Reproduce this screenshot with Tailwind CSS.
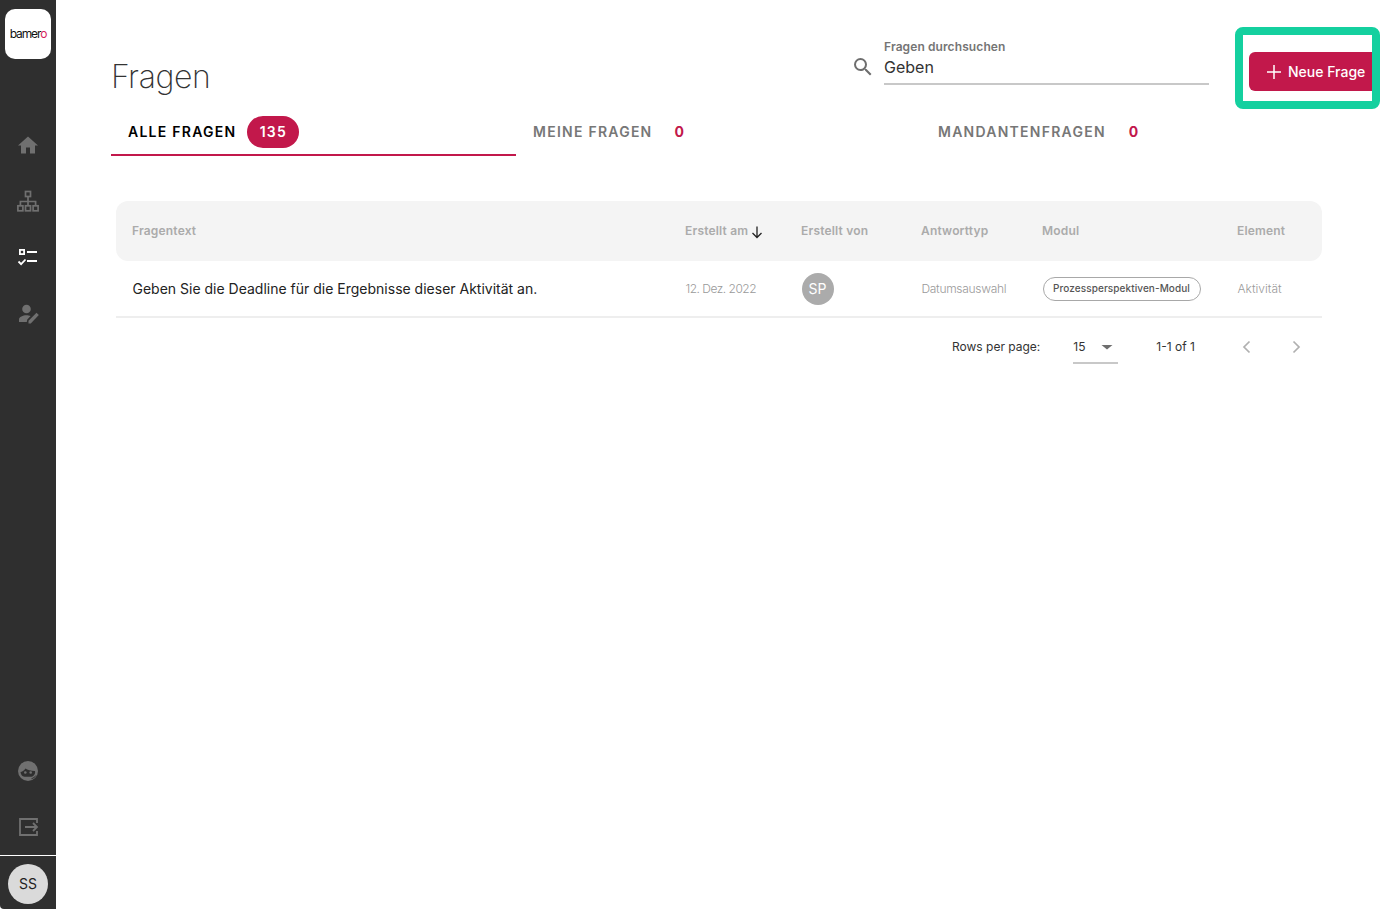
<!DOCTYPE html>
<html lang="de">
<head>
<meta charset="utf-8">
<title>Fragen</title>
<script src="https://cdn.jsdelivr.net/npm/@tailwindcss/browser@4"></script>
</head>
<body class="bg-white font-['Inter',sans-serif] overflow-hidden">
<div class="flex h-[909px] w-[1380px]">
    <!-- sidebar -->
    <aside class="w-[56px] shrink-0 bg-[#2f2f2f] flex flex-col rounded-bl-[4px]">
        <div class="mx-[5px] mt-[9px] h-[50px] w-[46px] bg-white rounded-[10px] flex items-center justify-center">
            <span class="text-[12px] tracking-[-1.1px] text-[#111]">bamer<span class="text-[#d81e5b]">o</span></span>
        </div>
        <nav class="flex flex-col items-center">
            <!-- home -->
            <svg class="mt-[74px] w-[24px] h-[24px]" viewBox="0 0 24 24" fill="#707070"><path d="M10 20.500v-6h4v6h5v-8h3L12 3.500 2 12.500h3v8z"/></svg>
            <!-- org tree -->
            <svg class="mt-[32px] w-[24px] h-[24px]" viewBox="0 0 24 24" fill="none" stroke="#707070" stroke-width="1.700"><rect x="9.500" y="2.500" width="5" height="5"/><rect x="1.900" y="16.800" width="5" height="5"/><rect x="9.500" y="16.800" width="5" height="5"/><rect x="17.100" y="16.800" width="5" height="5"/><path d="M12 7.500v9.300M4.400 16.800v-4.300h15.200v4.300"/></svg>
            <!-- checklist, active -->
            <svg class="mt-[32px] w-[24px] h-[24px]" viewBox="0 0 24 24" fill="none" stroke="#fff" stroke-width="1.800"><rect x="3.900" y="4.900" width="4.200" height="4.200"/><path d="M11 7h10M11 16h10M2.500 16.500l2.600 2.600 4.400-4.600"/></svg>
            <!-- person edit -->
            <svg class="mt-[33px] w-[24px] h-[24px]" viewBox="0 0 24 24" fill="#707070"><circle cx="10.500" cy="7" r="4.300"/><path d="M10.500 13.200c-3.600 0-7.500 1.700-7.500 4.200V20h7.800l.5-2.600 3.300-3.300c-1.400-.6-3-.9-4.100-.9z"/><path d="M12.500 21.500v-2.800l8-8 2.300 2.300-8 8.500z"/></svg>
        </nav>
        <div class="mt-auto flex flex-col items-center">
            <!-- support face -->
            <svg class="w-[24px] h-[24px]" viewBox="0 0 24 24"><circle cx="12" cy="12" r="10" fill="#707070"/><path fill="#2f2f2f" d="M4.500 13c1.500-.2 3.500-1.200 5-3.500 1.800 1.600 6 2.600 9.500 2.500.6 2.500-.8 5.200-3.500 5.800h-7C6 17.500 4.800 15.500 4.500 13z"/><circle cx="9.300" cy="13.500" r="1.300" fill="#707070"/><circle cx="14.700" cy="13.500" r="1.300" fill="#707070"/><path d="M15.500 19.700c2-.6 3.500-1.700 4.500-3.200" stroke="#2f2f2f" stroke-width="1" fill="none"/></svg>
            <!-- exit box -->
            <svg class="mt-[32px] w-[24px] h-[24px]" viewBox="0 0 24 24" fill="none" stroke="#707070" stroke-width="1.800"><path d="M21 8V4H4v16h17v-4"/><path d="M9 12h12M17 8l4 4-4 4"/></svg>
            <div class="mt-[16px] h-[1.500px] w-full bg-white"></div>
            <div class="mt-[8px] mb-[5px] w-[40px] h-[40px] rounded-full bg-[#dadada] flex items-center justify-center text-[14px] leading-[14px] pb-[1px] text-[#222]">SS</div>
        </div>
    </aside>

    <main class="flex-1 min-w-0">
        <!-- header -->
        <div class="flex h-[82px] mt-[27px] items-start">
            <h1 class="ml-[55px] mt-[30px] text-[32px] leading-[40px] font-extralight tracking-[-0.4px] text-[#333]">Fragen</h1>
            <div class="ml-auto mt-[13px] flex items-center">
                <svg class="w-[24px] h-[24px] mr-[9px] mt-[9px]" viewBox="0 0 24 24" fill="#6e6e6e"><path d="M15.500 14h-.79l-.28-.27A6.470 6.470 0 0 0 16 9.500 6.500 6.500 0 1 0 9.500 16c1.610 0 3.090-.59 4.230-1.570l.27.28v.79l5 4.990L20.490 19l-4.990-5zm-6 0C7.010 14 5 11.990 5 9.500S7.010 5 9.500 5 14 7.010 14 9.500 11.990 14 9.500 14z"/></svg>
                <div class="w-[325px] border-b-2 border-[#c8c8c8] h-[45px]">
                    <div class="text-[12px] leading-[14px] font-semibold tracking-[0.1px] text-[#757575]">Fragen durchsuchen</div>
                    <div class="mt-[3px] text-[16px] leading-[20px] text-[#333]">Geben</div>
                </div>
            </div>
            <!-- highlight box -->
            <div class="ml-[26px] w-[145px] h-[82px] border-[8px] border-[#14d09f] rounded-[8px] pt-[17px] pl-[6px] overflow-hidden">
                <button class="w-[124px] h-[39px] bg-[#c2184b] rounded-l-[6px] flex items-center pl-[17px] text-white text-[14px] font-medium whitespace-nowrap">
                    <svg class="w-[16px] h-[16px] mr-[6px] shrink-0" viewBox="0 0 16 16" fill="none" stroke="#fff" stroke-width="1.500"><path d="M8 1v14M1 8h14"/></svg>Neue Frage
                </button>
            </div>
        </div>

        <!-- tabs -->
        <div class="flex ml-[55px] h-[47px] text-[14px] font-semibold tracking-[1.250px]">
            <div class="w-[405px] border-b-2 border-[#c2184b] pl-[17px] pb-[1px] flex items-center text-black">
                ALLE FRAGEN
                <span class="ml-[11px] mt-[1px] h-[32px] w-[52px] rounded-full bg-[#c2184b] text-white flex items-center justify-center">135</span>
            </div>
            <div class="w-[405px] pl-[17px] pb-[3px] flex items-center text-[#777]">
                MEINE FRAGEN
                <span class="ml-[22px] text-[#c2184b] font-bold">0</span>
            </div>
            <div class="pl-[17px] pb-[3px] flex items-center text-[#777]">
                MANDANTENFRAGEN
                <span class="ml-[23px] text-[#c2184b] font-bold">0</span>
            </div>
        </div>

        <!-- table -->
        <div class="ml-[60px] w-[1206px] mt-[45px]">
            <div class="grid grid-cols-[553px_116px_120px_121px_195px_1fr] items-center h-[60px] bg-[#f4f4f4] rounded-[12px] pl-[16px] text-[12px] font-semibold tracking-[0.18px] text-[#ababab]">
                <div>Fragentext</div>
                <div class="flex items-center">Erstellt am
                    <svg class="w-[16px] h-[16px] ml-[1px] mt-[1px]" viewBox="0 0 16 16" fill="none" stroke="#222" stroke-width="1.300"><path d="M8 2.500v11M3.500 9l4.500 4.500L12.500 9"/></svg>
                </div>
                <div>Erstellt von</div>
                <div>Antworttyp</div>
                <div>Modul</div>
                <div>Element</div>
            </div>
            <div class="grid grid-cols-[553px_116px_120px_121px_195px_1fr] items-center h-[57px] border-b-2 border-[#eeeeee] pl-[16.500px] text-[12px] font-light tracking-[-0.3px] text-[#9a9a9a]">
                <div class="text-[14px] font-normal tracking-normal text-[#222]">Geben Sie die Deadline für die Ergebnisse dieser Aktivität an.</div>
                <div class="tracking-[-0.5px]">12. Dez. 2022</div>
                <div><span class="w-[32px] h-[32px] rounded-full bg-[#ababab] text-white text-[14px] font-normal tracking-normal flex items-center justify-center">SP</span></div>
                <div>Datumsauswahl</div>
                <div><span class="inline-flex items-center h-[24px] w-[158px] justify-center rounded-full border border-[#a8a8a8] text-[10px] font-medium tracking-[0.08px] text-[#555] whitespace-nowrap">Prozessperspektiven-Modul</span></div>
                <div class="tracking-normal">Aktivität</div>
            </div>

            <!-- pagination -->
            <div class="flex items-start h-[46px] text-[12px] text-[#333]">
                <span class="ml-[836px] mt-[21px] leading-[15px]">Rows per page:</span>
                <div class="ml-[33px] mt-[21px] w-[45px] h-[25px] border-b-2 border-[#c8c8c8] flex items-start leading-[15px]">
                    15
                    <svg class="ml-auto mr-[3px] mt-[1px] w-[16px] h-[14px]" viewBox="0 0 16 14" fill="#6e6e6e"><path d="M2.500 5h11L8 9.500z"/></svg>
                </div>
                <span class="ml-[38px] mt-[21px] leading-[15px]">1-1 of 1</span>
                <svg class="ml-[43px] mt-[20px] w-[18px] h-[18px]" viewBox="0 0 18 18" fill="none" stroke="#b0b0b0" stroke-width="1.700"><path d="M11.500 3.500L6 9l5.500 5.500"/></svg>
                <svg class="ml-[31px] mt-[20px] w-[18px] h-[18px]" viewBox="0 0 18 18" fill="none" stroke="#b0b0b0" stroke-width="1.700"><path d="M6.500 3.500L12 9l-5.500 5.500"/></svg>
            </div>
        </div>
    </main>
</div>
</body>
</html>
